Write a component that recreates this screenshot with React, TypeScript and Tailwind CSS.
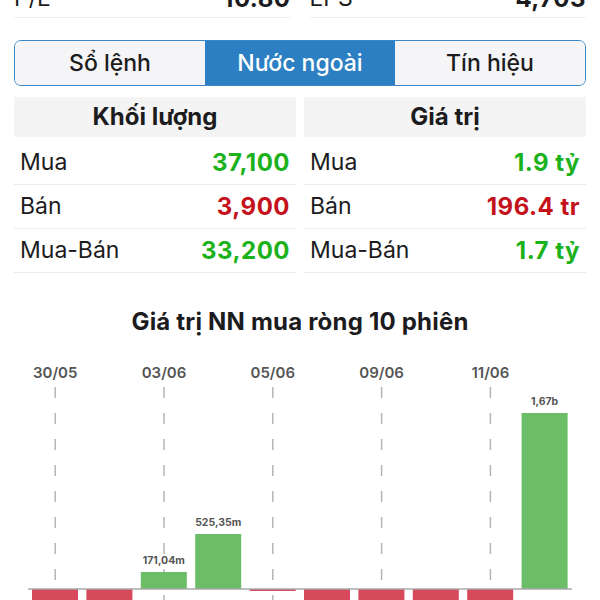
import React from "react";

type Row = { label: string; value: string; tone: "up" | "down" };

const volumeRows: Row[] = [
  { label: "Mua", value: "37,100", tone: "up" },
  { label: "Bán", value: "3,900", tone: "down" },
  { label: "Mua-Bán", value: "33,200", tone: "up" },
];

const valueRows: Row[] = [
  { label: "Mua", value: "1.9 tỷ", tone: "up" },
  { label: "Bán", value: "196.4 tr", tone: "down" },
  { label: "Mua-Bán", value: "1.7 tỷ", tone: "up" },
];

// net foreign value per session, in px height above (+) or below (-) baseline
const bars = [
  { h: -40 },
  { h: -40 },
  { h: 17, label: "171,04m" },
  { h: 55, label: "525,35m" },
  { h: -2 },
  { h: -40 },
  { h: -40 },
  { h: -40 },
  { h: -40 },
  { h: 176, label: "1,67b" },
];

const dates = [
  { i: 0, text: "30/05" },
  { i: 2, text: "03/06" },
  { i: 4, text: "05/06" },
  { i: 6, text: "09/06" },
  { i: 8, text: "11/06" },
];

function StatTable({ title, rows }: { title: string; rows: Row[] }) {
  return (
    <div className="flex-1">
      <div className="mb-1 flex h-[40px] items-center justify-center bg-[#f4f4f5] text-[24px] font-bold text-[#1c1c1e]">
        {title}
      </div>
      {rows.map((r) => (
        <div key={r.label} className="flex h-[44px] items-center justify-between border-b border-[#ececec] px-[6px]">
          <span className="text-[23px] text-[#1c1c1e]">{r.label}</span>
          <span
            className={`text-[24px] font-bold tracking-[0.5px] ${r.tone === "up" ? "text-[#1cb21c]" : "text-[#c4111c]"}`}
          >
            {r.value}
          </span>
        </div>
      ))}
    </div>
  );
}

function NetChart() {
  const left = 28;
  const pitch = 54.4;
  const base = 239; // baseline inside svg
  return (
    <svg width="600" height="250" className="block">
      {dates.map((d) => {
        const x = left + pitch * d.i + pitch / 2;
        return (
          <g key={d.text}>
            <text x={x} y={28} textAnchor="middle" fontSize="15" fontWeight="600" fill="#555">
              {d.text}
            </text>
            <line x1={x} y1={37} x2={x} y2={250} stroke="#b5b5b5" strokeWidth="1.5" strokeDasharray="11 15" />
          </g>
        );
      })}
      {bars.map((b, i) => {
        const x = left + pitch * i + 4;
        const up = b.h > 0;
        return (
          <g key={i}>
            <rect
              x={x}
              y={up ? base - b.h : base}
              width="46"
              height={Math.abs(b.h)}
              fill={up ? "#6bbd68" : "#d64a5b"}
            />
            {b.label && (
              <text x={x + 23} y={base - b.h - 8} textAnchor="middle" fontSize="10.5" fontWeight="700" fill="#555">
                {b.label}
              </text>
            )}
          </g>
        );
      })}
      <line x1={left} y1={base} x2={572} y2={base} stroke="#a8a8a8" strokeWidth="1.5" />
    </svg>
  );
}

export default function App() {
  return (
    <div className="h-[600px] w-[600px] overflow-hidden bg-white font-['Inter',sans-serif]">
      <div className="mx-[14px] mt-[-26px] flex gap-[19px]">
        <div className="flex h-[44px] flex-1 items-center justify-between border-b border-[#efefef] pt-[6px]">
          <span className="text-[23px] text-[#1c1c1e]">P/E</span>
          <span className="text-[24px] font-bold tracking-[0.5px] text-[#1c1c1e]">10.80</span>
        </div>
        <div className="flex h-[44px] flex-1 items-center justify-between border-b border-[#efefef] pt-[6px]">
          <span className="text-[23px] text-[#1c1c1e]">EPS</span>
          <span className="text-[24px] font-bold tracking-[0.5px] text-[#1c1c1e]">4,703</span>
        </div>
      </div>

      <div className="mx-[14px] mt-[22px] flex h-[46px] overflow-hidden rounded-[7px] border-[1.5px] border-[#3a86c6]">
        <div className="flex flex-1 items-center justify-center bg-[#f5f5f7] text-[23px] font-medium text-[#1c1c1e]">Sổ lệnh</div>
        <div className="flex flex-1 items-center justify-center bg-[#2b7fc2] text-[23px] font-medium text-white">Nước ngoài</div>
        <div className="flex flex-1 items-center justify-center bg-[#f5f5f7] text-[23px] font-medium text-[#1c1c1e]">Tín hiệu</div>
      </div>

      <div className="mx-[14px] mt-[11px] flex gap-[8px]">
        <StatTable title="Khối lượng" rows={volumeRows} />
        <StatTable title="Giá trị" rows={valueRows} />
      </div>

      <div className="mt-[31px] text-center text-[24px] font-bold tracking-[0.2px] text-[#1c1c1e]">
        Giá trị NN mua ròng 10 phiên
      </div>

      <div className="mt-[10px]">
        <NetChart />
      </div>
    </div>
  );
}
